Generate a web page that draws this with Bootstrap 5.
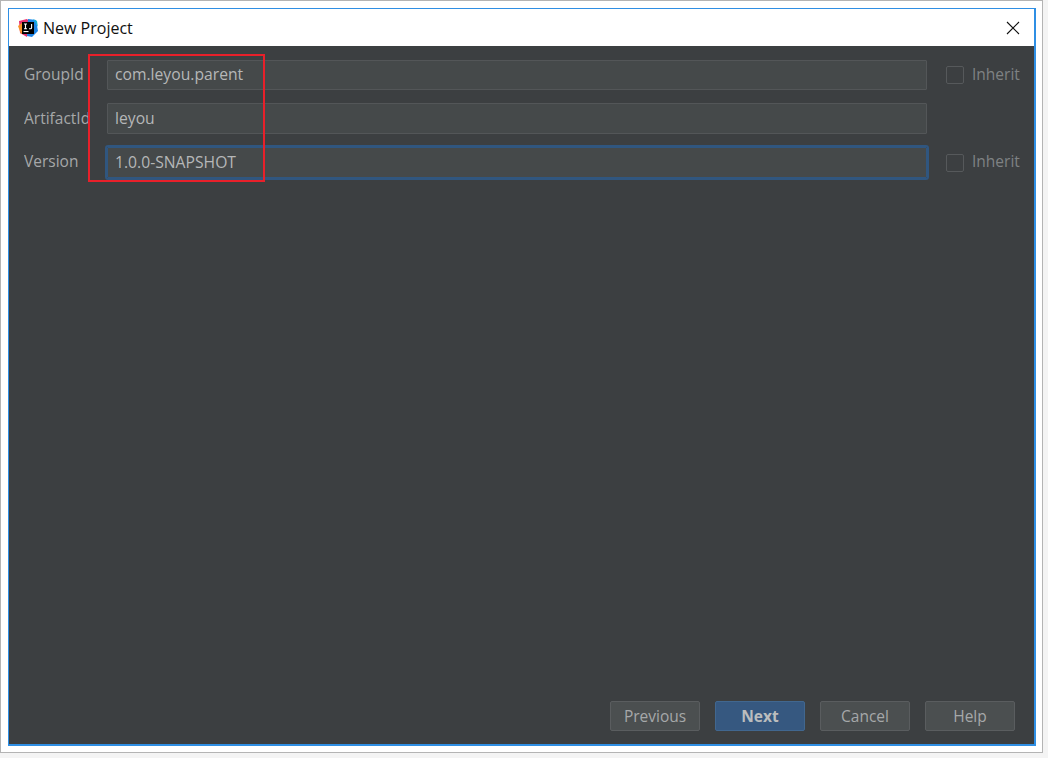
<!DOCTYPE html>
<html lang="en">
<head>
<meta charset="utf-8">
<title>New Project</title>
<link href="https://cdn.jsdelivr.net/npm/bootstrap@5.3.0/dist/css/bootstrap.min.css" rel="stylesheet">
<style>
html, body { margin: 0; height: 100%; background: #f4f4f4; }
body { font-family: "Open Sans", "Noto Sans", sans-serif; overflow: hidden; }
.shot-frame { width: 1043px; height: 753px; background: #fff; border: 1px solid #b4b4b4; padding: 7px 6px 6px 7px; position: relative; }
.ide-window { height: 100%; border: 1px solid #2f8fe4; border-width: 1px 2px 2px 1px; background: #3c3f41; }
.ide-title { height: 37px; background: #fff; padding-left: 9px; color: #111; font-size: 16px; gap: 5px; }
.ide-body { padding: 14px 0 13px 15px; }
.ide-row { height: 31px; margin-bottom: 12px; }
.ide-row-first { height: 30px; margin-bottom: 13px; }
.ide-row-mid { margin-bottom: 13px; }
.ide-row-last .ide-label, .ide-row-last .ide-inherit { padding-bottom: 2px; }
.ide-label { width: 68px; margin-right: 15px; overflow: hidden; white-space: nowrap; color: #a6a8a9; font-size: 15.5px; }
.ide-input { width: 820px; height: 100%; background: #45494a; border: 1px solid #535658; border-radius: 1px; color: #b5b7b8; font-size: 15.7px; padding: 0 7px 2px; box-shadow: none; }
.ide-input:focus { background: #45494a; color: #b5b7b8; border-color: #535658; box-shadow: none; }
.ide-focused, .ide-focused:focus { outline: 2px solid #30567f; outline-offset: 0; border-color: #30567f; }
.ide-check { width: 18px; height: 18px; margin-left: 19px; margin-right: 8px; background: #3c3f41; border: 1px solid #56595b; border-radius: 2px; }
.ide-inherit { color: #7f8284; font-size: 15.5px; }
.ide-btn { width: 90px; height: 30px; padding: 1px 0 0; background: #4b4f50; border: 1px solid #5a5d5f; border-radius: 2px; color: #a6a8a9; font-size: 15.5px; line-height: 1; }
.ide-btn-next { background: #365880; border-color: #41678f; color: #bbbdbe; font-weight: 700; }
.ide-actions { gap: 15px; padding: 0 19px 13px 0; }
.ide-mark { position: absolute; left: 87px; top: 53px; width: 177px; height: 128px; border: 2px solid #e8202a; pointer-events: none; }
.ide-close { margin-left: auto; margin-right: 14px; }
</style>
</head>
<body>
<div class="shot-frame">
  <div class="ide-window d-flex flex-column">
    <div class="ide-title d-flex align-items-center flex-shrink-0">
      <svg width="20" height="20" viewBox="0 0 20 20" aria-hidden="true">
        <path d="M1 3 L9 1 L12 4 L9 19 L2 15 Z" fill="#e8306f"/>
        <path d="M0 8 L4 5 L6 14 L3 16 Z" fill="#f79226"/>
        <path d="M10 1 L18 2 L20 13 L14 19 L9 18 Z" fill="#1e86e8"/>
        <path d="M15 1 L19 3 L20 9 Z" fill="#17b5d8"/>
        <rect x="4" y="4" width="12" height="12" fill="#000"/>
        <rect x="5.5" y="13" width="5" height="1.1" fill="#fff"/>
        <path d="M6 6 H9 M7.5 6 V10.8 M6 10.8 H9 M13.6 6 V9.8 Q13.6 10.8 12.5 10.8 H11" stroke="#fff" stroke-width="1.1" fill="none"/>
      </svg>
      <span>New Project</span>
      <svg class="ide-close" width="14" height="14" viewBox="0 0 14 14" aria-hidden="true">
        <path d="M1 1 L13 13 M13 1 L1 13" stroke="#111" stroke-width="1.1"/>
      </svg>
    </div>
    <div class="ide-body d-flex flex-column flex-grow-1">
      <div class="ide-row ide-row-first d-flex align-items-center">
        <div class="ide-label flex-shrink-0">GroupId</div>
        <input class="form-control ide-input flex-shrink-0" value="com.leyou.parent">
        <span class="ide-check flex-shrink-0"></span><span class="ide-inherit">Inherit</span>
      </div>
      <div class="ide-row ide-row-mid d-flex align-items-center">
        <div class="ide-label flex-shrink-0">ArtifactId</div>
        <input class="form-control ide-input flex-shrink-0" value="leyou">
      </div>
      <div class="ide-row ide-row-last d-flex align-items-center">
        <div class="ide-label flex-shrink-0">Version</div>
        <input class="form-control ide-input ide-focused flex-shrink-0" value="1.0.0-SNAPSHOT">
        <span class="ide-check flex-shrink-0"></span><span class="ide-inherit">Inherit</span>
      </div>
    </div>
    <div class="ide-actions d-flex justify-content-end flex-shrink-0">
      <button type="button" class="btn ide-btn">Previous</button>
      <button type="button" class="btn ide-btn ide-btn-next">Next</button>
      <button type="button" class="btn ide-btn">Cancel</button>
      <button type="button" class="btn ide-btn">Help</button>
    </div>
  </div>
  <div class="ide-mark"></div>
</div>
<script src="https://cdn.jsdelivr.net/npm/bootstrap@5.3.0/dist/js/bootstrap.bundle.min.js"></script>
</body>
</html>
